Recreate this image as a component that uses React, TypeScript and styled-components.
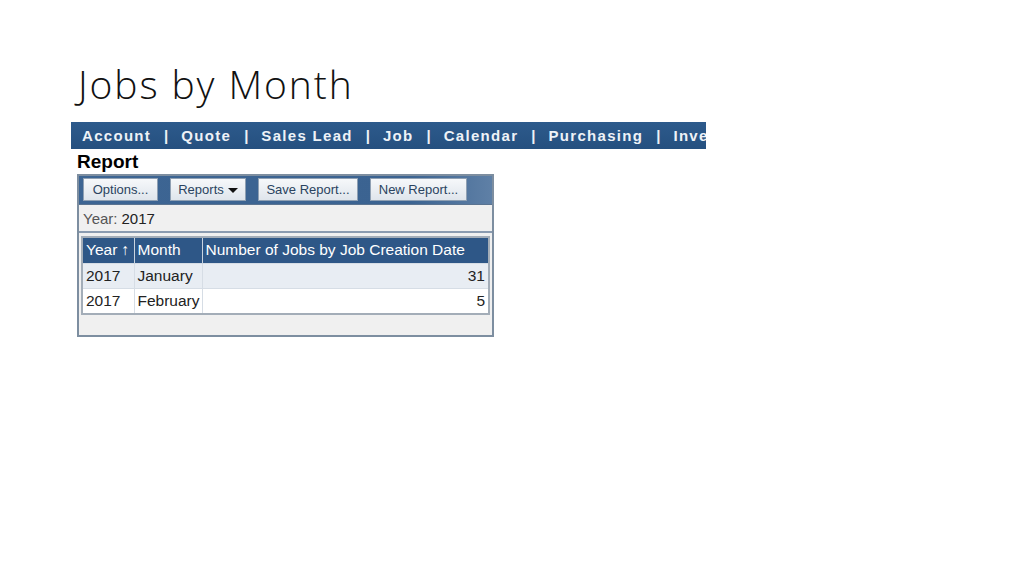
import styled, { createGlobalStyle } from 'styled-components';

const GlobalStyle = createGlobalStyle`
  html, body {
    margin: 0;
    padding: 0;
    background: #ffffff;
  }
`;

const Page = styled.div`
  width: 1024px;
  height: 576px;
  padding: 58px 0 0 71px;
  box-sizing: border-box;
  font-family: 'Liberation Sans', Arial, sans-serif;
`;

const Title = styled.h1`
  margin: 0 0 12px 7px;
  font-family: 'Open Sans', sans-serif;
  font-weight: 300;
  font-size: 39px;
  line-height: 52px;
  color: #111;
  letter-spacing: 1.9px;
`;

const NavBar = styled.div`
  width: 635px;
  height: 27px;
  overflow: hidden;
  display: flex;
  align-items: center;
  padding-left: 11px;
  box-sizing: border-box;
  background: linear-gradient(#2d5a8c, #25507f);
  white-space: nowrap;
`;

const NavItem = styled.span`
  color: #eef2f7;
  font-weight: bold;
  font-size: 15px;
  letter-spacing: 1.3px;
`;

const NavSep = styled.span`
  color: #eef2f7;
  font-weight: bold;
  font-size: 15px;
  padding: 0 13px;
`;

const Heading = styled.div`
  margin: 2px 0 0 6px;
  font-weight: bold;
  font-size: 19px;
  line-height: 22px;
  color: #000;
`;

const Panel = styled.div`
  margin: 1px 0 0 6px;
  width: 417px;
  height: 163px;
  box-sizing: border-box;
  border: 2px solid #7d8ea0;
  background: #f0f0f0;
  display: flex;
  flex-direction: column;
`;

const Toolbar = styled.div`
  display: flex;
  gap: 12px;
  padding: 2px 0 0 4px;
  height: 29px;
  box-sizing: border-box;
  background: linear-gradient(90deg, #3d6593, #3b6391 80%, #5f80a6);
  border-bottom: 1px solid #5a7390;
`;

const Button = styled.div<{ w: number }>`
  width: ${(p) => p.w}px;
  height: 23px;
  box-sizing: border-box;
  border: 1px solid #8fa0b3;
  background: linear-gradient(#f6f8fa, #dfe5ec);
  color: #2a4360;
  font-size: 13px;
  display: flex;
  align-items: center;
  justify-content: center;
  gap: 4px;
`;

const Caret = styled.span`
  width: 0;
  height: 0;
  border-left: 5px solid transparent;
  border-right: 5px solid transparent;
  border-top: 5px solid #111;
  margin-top: 2px;
`;

const YearRow = styled.div`
  height: 26px;
  display: flex;
  align-items: center;
  padding-left: 4px;
  font-size: 15px;
  color: #555;
  border-bottom: 2px solid #8a9bb0;
`;

const YearValue = styled.span`
  color: #222;
  margin-left: 4px;
`;

const Table = styled.table`
  margin: 3px 0 0 2px;
  width: 409px;
  border-collapse: collapse;
  border: 2px solid #a3adb8;
  font-size: 15.5px;
  table-layout: fixed;
`;

const Th = styled.th<{ w?: number }>`
  background: #2e5787;
  color: #fff;
  font-weight: normal;
  text-align: left;
  height: 26px;
  padding: 0 3px;
  border-right: 1px solid #c9d4e0;
  width: ${(p) => (p.w ? `${p.w}px` : 'auto')};
  white-space: nowrap;
  overflow: hidden;
  box-sizing: border-box;
`;

const Tr = styled.tr<{ alt?: boolean }>`
  background: ${(p) => (p.alt ? '#ffffff' : '#e8edf3')};
`;

const Td = styled.td<{ right?: boolean }>`
  height: 24px;
  padding: 0 3px;
  color: #222;
  text-align: ${(p) => (p.right ? 'right' : 'left')};
  border-right: 1px solid #d6dde5;
  border-top: 1px solid #d6dde5;
  white-space: nowrap;
`;

const navItems = ['Account', 'Quote', 'Sales Lead', 'Job', 'Calendar', 'Purchasing', 'Inventory'];

const rows = [
  { year: 2017, month: 'January', count: 31 },
  { year: 2017, month: 'February', count: 5 },
];

export default function App() {
  return (
    <>
      <GlobalStyle />
      <Page>
        <Title>Jobs by Month</Title>
        <NavBar>
          {navItems.map((item, i) => (
            <span key={item}>
              {i > 0 && <NavSep>|</NavSep>}
              <NavItem>{item}</NavItem>
            </span>
          ))}
        </NavBar>
        <Heading>Report</Heading>
        <Panel>
          <Toolbar>
            <Button w={75}>Options...</Button>
            <Button w={76}>
              Reports <Caret />
            </Button>
            <Button w={100}>Save Report...</Button>
            <Button w={97}>New Report...</Button>
          </Toolbar>
          <YearRow>
            Year: <YearValue>2017</YearValue>
          </YearRow>
          <Table>
            <thead>
              <tr>
                <Th w={52}>Year ↑</Th>
                <Th w={68}>Month</Th>
                <Th>Number of Jobs by Job Creation Date</Th>
              </tr>
            </thead>
            <tbody>
              {rows.map((r, i) => (
                <Tr key={r.month} alt={i % 2 === 1}>
                  <Td>{r.year}</Td>
                  <Td>{r.month}</Td>
                  <Td right>{r.count}</Td>
                </Tr>
              ))}
            </tbody>
          </Table>
        </Panel>
      </Page>
    </>
  );
}
